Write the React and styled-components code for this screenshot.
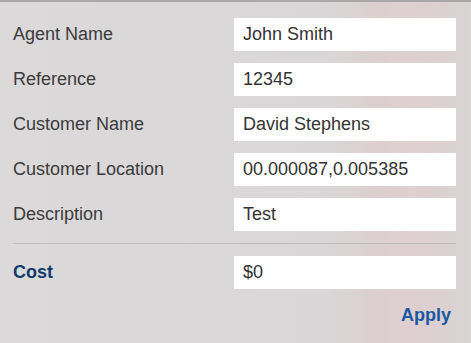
import styled, { createGlobalStyle } from "styled-components";

const GlobalStyle = createGlobalStyle`
  html, body {
    margin: 0;
    padding: 0;
  }
  body {
    font-family: "Liberation Sans", Arial, sans-serif;
    background: #d9d7d7;
  }
`;

const Panel = styled.div`
  width: 471px;
  height: 343px;
  box-sizing: border-box;
  border-top: 2px solid #a9a7a7;
  padding: 16px 15px 0 13px;
  background: linear-gradient(
    90deg,
    #dbd9d9 0px,
    #d8d6d6 330px,
    #dccfd0 375px,
    #dfcfd0 405px,
    #dcd0d1 440px,
    #d7d4d4 471px
  );
`;

const Form = styled.div`
  display: flex;
  flex-direction: column;
  gap: 12px;
`;

const Row = styled.div`
  display: grid;
  grid-template-columns: 221px 222px;
  align-items: center;
  height: 33px;
`;

const Label = styled.span`
  font-size: 18px;
  color: ${props => (props.strong ? "#0f3c6c" : "#3b3b3b")};
  font-weight: ${props => (props.strong ? 700 : 400)};
`;

const Field = styled.div`
  height: 33px;
  background: #fff;
  display: flex;
  align-items: center;
  padding-left: 9px;
  box-sizing: border-box;
  font-size: 18px;
  color: #333;
`;

const Divider = styled.hr`
  margin: 0;
  border: none;
  border-top: 1px solid #bdbbbb;
  width: 443px;
`;

const Actions = styled.div`
  display: flex;
  justify-content: flex-end;
  padding: 16px 5px 0 0;
`;

const ApplyButton = styled.button`
  background: none;
  border: none;
  padding: 0;
  font-family: "Liberation Sans", Arial, sans-serif;
  font-size: 18px;
  font-weight: 700;
  color: #1b58a2;
  cursor: pointer;
`;

const fields = [
  { label: "Agent Name", value: "John Smith" },
  { label: "Reference", value: "12345" },
  { label: "Customer Name", value: "David Stephens" },
  { label: "Customer Location", value: "00.000087,0.005385" },
  { label: "Description", value: "Test" },
];

export default function App() {
  return (
    <>
      <GlobalStyle />
      <Panel>
        <Form>
          {fields.map(f => (
            <Row key={f.label}>
              <Label>{f.label}</Label>
              <Field>{f.value}</Field>
            </Row>
          ))}
          <Divider />
          <Row>
            <Label strong>Cost</Label>
            <Field>$0</Field>
          </Row>
        </Form>
        <Actions>
          <ApplyButton>Apply</ApplyButton>
        </Actions>
      </Panel>
    </>
  );
}
